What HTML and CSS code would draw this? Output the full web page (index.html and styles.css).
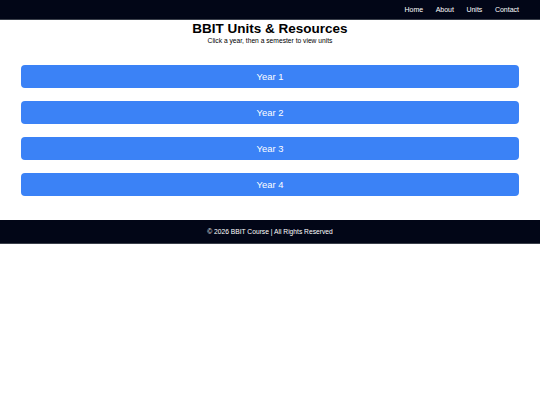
FILE: index.html
```html
<!DOCTYPE html>
<html>
<head>
<meta charset="utf-8">
<link rel="stylesheet" href="styles.css">
</head>
<body>
<nav class="nav">
  <a href="#">Home</a>
  <a href="#">About</a>
  <a href="#">Units</a>
  <a href="#">Contact</a>
</nav>
<header class="head">
  <h1 class="title">BBIT Units &amp; Resources</h1>
  <p class="sub">Click a year, then a semester to view units</p>
</header>
<main class="years">
  <button class="year">Year 1</button>
  <button class="year">Year 2</button>
  <button class="year">Year 3</button>
  <button class="year">Year 4</button>
</main>
<footer class="foot">© 2026 BBIT Course | All Rights Reserved</footer>
</body>
</html>
```
FILE: styles.css
```css
html, body { margin: 0; padding: 0; background: #fff; }
body { font-family: "Liberation Sans", Arial, sans-serif; color: #000; }
.nav {
  height: 20px;
  background: #020617;
  display: flex;
  justify-content: flex-end;
  align-items: center;
  gap: 12.5px;
  padding-right: 21px;
  border-bottom: 1px solid #3a3f4a;
  box-sizing: border-box;
}
.nav a { color: #fff; text-decoration: none; font-size: 7px; }
.head { text-align: center; }
.title { margin: 0; font-size: 13.5px; line-height: 16px; padding-top: 1px; font-weight: bold; }
.sub { margin: 0; font-size: 6.7px; line-height: 8px; }
.years {
  display: flex;
  flex-direction: column;
  gap: 13px;
  padding: 20px 21px 24px 21px;
}
.year {
  height: 23px;
  border: none;
  border-radius: 4px;
  background: #3b82f6;
  color: #fff;
  font-family: "Liberation Sans", Arial, sans-serif;
  font-size: 9.4px;
  padding: 0;
}
.foot {
  background: #020617;
  color: #fff;
  height: 24px;
  display: flex;
  align-items: center;
  justify-content: center;
  font-size: 6.7px;
  border-bottom: 1px solid #3a3f4a;
  box-sizing: border-box;
}
```
